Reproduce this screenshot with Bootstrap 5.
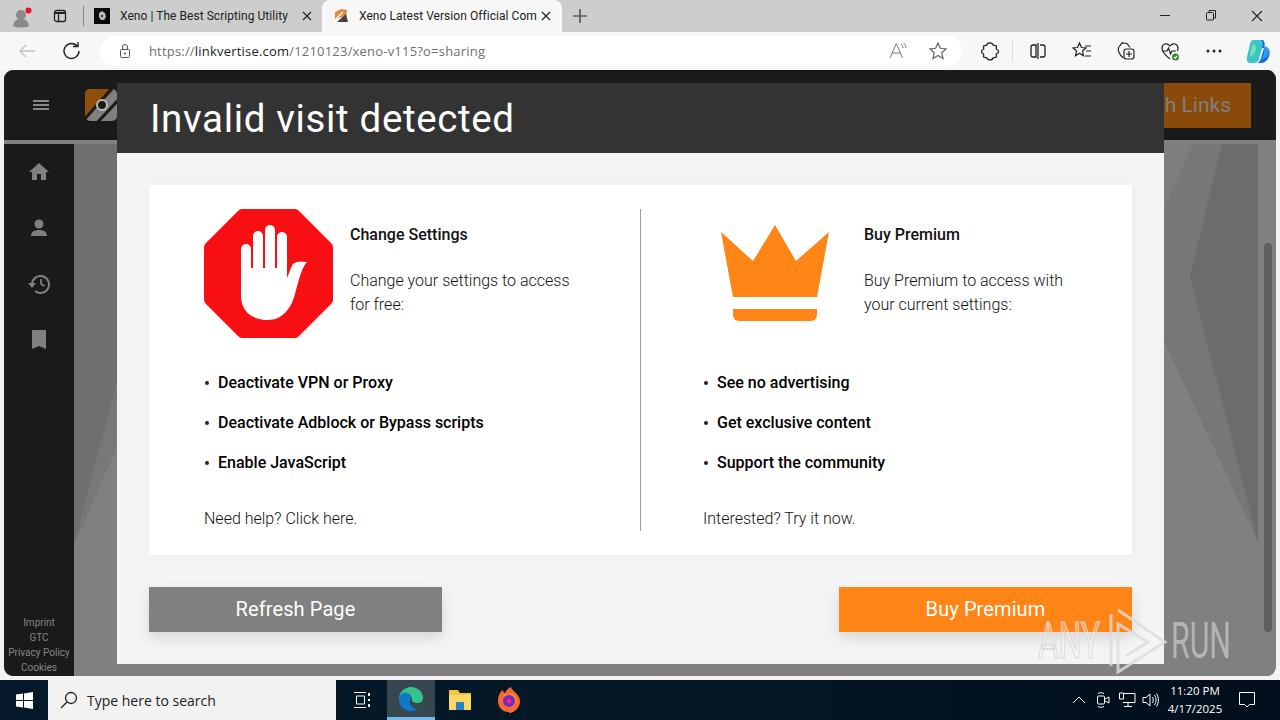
<!DOCTYPE html>
<html lang="en">
<head>
<meta charset="utf-8">
<title>Invalid visit detected</title>
<link href="https://cdn.jsdelivr.net/npm/bootstrap@5.3.0/dist/css/bootstrap.min.css" rel="stylesheet">
<style>
html,body{height:720px;overflow:hidden;background:#f3f3f3}
.desk{height:720px;width:1280px;position:relative}
.tabstrip{height:32px;background:#cdcdcd;font:12px Roboto,sans-serif;color:#222}
.tabstrip svg,.toolrow svg{display:block;flex:none}
.profile{width:44px;justify-content:center}
.tab-btn{width:32px;justify-content:center}
.tab-sep{width:1px;height:20px;background:#888;margin:0 10px 0 7px}
.tab-any{height:32px;width:228px;padding:0 9px 0 0;white-space:nowrap;overflow:hidden}
.tab-on{background:#f7f7f7;border-radius:8px 8px 0 0;width:240px;padding:0 10px 0 11px;height:32px}
.tab-title{flex:1;overflow:hidden;margin-left:10px;white-space:nowrap;letter-spacing:.05px}
.tab-fav{width:16px;height:16px;flex:none}
.plus-ico{margin-left:9px}
.winctl{margin-left:auto;gap:0}
.winctl span{width:46px;display:flex;justify-content:center}
.toolrow{height:38px;background:#f7f7f7;padding-top:4px;padding-bottom:4px}
.backslot{width:54px;justify-content:center}
.reloadslot{width:36px;justify-content:center}
.addr{width:863px;height:30px;background:#fff;border-radius:15px;padding:0 14px 0 18px;margin-left:10px;font:13px "Open Sans",sans-serif;color:#6f6f6f}
.addr b{font-weight:400;color:#1d1d1d}
.url{margin-left:17px;flex:1;letter-spacing:.2px}
.tools{flex:1;padding-left:6px}
.tool{width:44px;display:flex;justify-content:center}
.tool-sep{width:1px;height:22px;background:#ddd;margin:0 3px 0 0}
.viewport{position:relative;height:606px;margin:0 4px;background:#808080;border-radius:9px;overflow:hidden}
.page-head{height:70px;background:#1a1a1a;margin-bottom:4px;padding-left:29px;position:relative}
.burger{width:16px;height:10px;border-top:2px solid #888;border-bottom:2px solid #888;position:relative}
.burger::after{content:"";position:absolute;left:0;right:0;top:2px;height:2px;background:#888}
.logo-slot{margin-left:36px}
.cta{position:absolute;top:13px;right:25px;width:200px;height:45px;background:#8a4a0a;color:#808080;font:400 21px Roboto,sans-serif;line-height:45px;text-align:right;padding-right:20px}
.side{width:70px;height:532px;background:#1a1a1a;color:#808080;position:relative;z-index:1}
.side-ico{height:56px;display:flex;justify-content:center;align-items:center}
.foot{margin-top:auto;font:10px/15px Roboto,sans-serif;text-align:center;padding-bottom:1px;color:#858585}
.scrollthumb{position:absolute;right:4px;top:173px;width:8px;height:389px;background:#5f5f5f;border-radius:4px}
.deco{position:absolute;left:70px;top:74px;width:1202px;height:532px}
.dialog{position:absolute;left:113px;top:13px;width:1047px;height:581px;background:#f4f4f4;font-family:Roboto,sans-serif}
.dialog-head{height:70px;background:#333;color:#fff;font-size:38.5px;line-height:72px;padding-left:33px;letter-spacing:.65px}
.dialog-body{padding:32px 32px 0}
.panel{height:370px;background:#fff;box-shadow:0 0 14px rgba(0,0,0,.04);padding:24px 0}
.halfcol{height:322px;padding-left:55px;width:491px;color:#111;font-size:16px;line-height:24px;font-weight:300}
.halfcol.rightcol{border-left:1px solid #9a9a9a;padding-left:62px;width:492px}
.promo{height:129px}
.promo-ico{width:129px;flex:none}
.rightcol .promo-ico{width:161px;padding-left:17px}
.crown-ico{margin-top:16px}
.promo-txt{margin-left:17px;padding-top:14px;width:240px}
.rightcol .promo-txt{margin-left:0;width:215px}
.promo-txt strong{font-weight:500;display:block;margin-bottom:22px}
.perks{list-style:none;margin:32px 0 0;padding:1px 0 0;font-weight:500;color:#000}
.perks li{height:24px;margin-bottom:16px;padding-left:14px;position:relative}
.perks li::before{content:"";position:absolute;left:1px;top:10px;width:4px;height:4px;border-radius:50%;background:#222}
.after{margin-top:32px;color:#111}
.actions{margin-top:32px}
.act{width:293px;height:45px;border:0;border-radius:0;color:#fff;font-size:20px;line-height:45px;padding:0;box-shadow:0 6px 14px rgba(0,0,0,.12);text-align:center;letter-spacing:.1px}
.act-grey{background:gray}
.act-orange{background:#ff8516}
.wm{position:absolute;left:1036px;top:606px;width:244px;height:70px;pointer-events:none}
.wm text{font-family:Roboto,sans-serif;font-size:50px}
.taskbar{position:absolute;left:0;top:680px;width:1280px;height:40px;background:linear-gradient(90deg,#06192a,#041725 50%,#020e1c);color:#fff}
.startbtn{width:48px;justify-content:center}
.searchbox{width:288px;height:40px;background:#f2f2f2;color:#222;font:14px "Open Sans",sans-serif;padding-left:12px}
.searchbox span{margin-left:9px}
.tb-ico{width:49px;height:40px;justify-content:center}
.tb-ico.tb-first{width:51px}
.tb-ico.act-app{width:48px;background:#36474f;border-bottom:3px solid #76b9ed}
.tray{margin-left:auto;font:11.5px/18px "Open Sans",sans-serif;text-align:center;padding-right:10px}
.tray-cam{margin-left:10px}
.tray-net{margin-left:8px}
.tray-vol{margin-left:6px}
.clock{width:56px;margin-left:7px;margin-right:1px}
.notif{width:46px;justify-content:center}
</style>
</head>
<body>
<div class="desk d-flex flex-column">
  <div class="tabstrip d-flex align-items-center">
    <div class="d-flex align-items-center profile">
      <svg width="26" height="26" viewBox="0 0 26 26"><circle cx="12" cy="12" r="5" fill="#8a8a8a"/><path d="M4 23c1-6 4-7 8-7s7 1 8 7c-4 2-12 2-16 0z" fill="#8a8a8a"/><circle cx="19.500" cy="7.500" r="3" fill="#e81123"/></svg>
    </div>
    <div class="d-flex align-items-center tab-btn">
      <svg width="16" height="16" viewBox="0 0 16 16" fill="none" stroke="#222" stroke-width="1.300"><rect x="2.500" y="2.500" width="11" height="11" rx="2"/><path d="M2.500 5h11" stroke-width="2"/><path d="M6.500 5v8.500" /></svg>
    </div>
    <div class="tab-sep"></div>
    <div class="d-flex align-items-center tab-any">
      <svg class="tab-fav" viewBox="0 0 16 16"><rect width="16" height="16" fill="#0a0a0a"/><path d="M5 5l3-2 3 2 1 4-2 3H7L5 9z" fill="#bbb"/><path d="M7 7h2v2H7z" fill="#333"/></svg>
      <span class="tab-title">Xeno | The Best Scripting Utility</span>
      <svg width="12" height="12" viewBox="0 0 12 12" stroke="#222" stroke-width="1.200"><path d="M2 2l8 8M10 2l-8 8"/></svg>
    </div>
    <div class="d-flex align-items-center tab-on">
      <svg class="tab-fav" viewBox="0 0 16 16"><path d="M2 4l6-3 6 1-1 6-11 3z" fill="#e8873a"/><path d="M4 14l9-8 2 8z" fill="#444"/><path d="M3 11l7-7" stroke="#fff" stroke-width="1.500"/></svg>
      <span class="tab-title">Xeno Latest Version Official Com</span>
      <svg width="12" height="12" viewBox="0 0 12 12" stroke="#222" stroke-width="1.200"><path d="M2 2l8 8M10 2l-8 8"/></svg>
    </div>
    <svg class="plus-ico" width="18" height="18" viewBox="0 0 18 18" stroke="#333" stroke-width="1.200"><path d="M9 2v14M2 9h14"/></svg>
    <div class="d-flex winctl">
      <span><svg width="12" height="12" viewBox="0 0 12 12" stroke="#222"><path d="M1 6.500h10"/></svg></span>
      <span><svg width="12" height="12" viewBox="0 0 12 12" fill="none" stroke="#222"><rect x="1.500" y="3.500" width="7" height="7.500" rx="1"/><path d="M4 3V1.500h6.500V9H9"/></svg></span>
      <span><svg width="14" height="14" viewBox="0 0 14 14" stroke="#222" stroke-width="1.100"><path d="M2 2l10 10M12 2L2 12"/></svg></span>
    </div>
  </div>

  <div class="toolrow d-flex align-items-center">
    <div class="d-flex backslot"><svg width="20" height="20" viewBox="0 0 20 20" fill="none" stroke="#c4c4c4" stroke-width="1.300"><path d="M18 10H3M9 4l-6 6 6 6"/></svg></div>
    <div class="d-flex reloadslot"><svg width="20" height="20" viewBox="0 0 20 20" fill="none" stroke="#222" stroke-width="1.400"><path d="M15.500 5.500A7.500 7.500 0 1 0 17 10"/><path d="M11 5.500h5V1"/></svg></div>
    <div class="addr d-flex align-items-center">
      <svg width="14" height="16" viewBox="0 0 14 16" fill="none" stroke="#555"><rect x="2.500" y="6.500" width="9" height="8" rx="1"/><path d="M4.500 6.500V4a2.500 2.500 0 0 1 5 0v2.500"/><circle cx="7" cy="10.500" r=".7" fill="#555"/></svg>
      <span class="url">https://<b>linkvertise.com</b>/1210123/xeno-v115?o=sharing</span>
      <svg class="me-3" width="20" height="20" viewBox="0 0 20 20" fill="none" stroke="#777"><path d="M2 17L8 3h.5l6 14M4.500 12h8"/><path d="M13 3c1.500 1 2 2 2 4M15.500 2c2 1.500 2.500 3 2.500 5" /></svg>
      <svg class="ms-1" width="20" height="20" viewBox="0 0 20 20" fill="none" stroke="#666" stroke-width="1.200"><path d="M10 2l2.400 5.300 5.600.6-4.200 3.800 1.200 5.800-5-3-5 3 1.200-5.800L2 7.900l5.600-.6z"/></svg>
    </div>
    <div class="tools d-flex align-items-center">
      <span class="tool"><svg width="20" height="20" viewBox="0 0 20 20" fill="none" stroke="#222" stroke-width="1.300"><path d="M7 4C7 1.200 12.500 1 13 4c0 1 3.500-.3 3.500 1.500 0 2-1 2.500.5 3 2 .6 2 3.400 0 4-1.500.5-.5 1-.5 3 0 1.800-3.500.5-3.500 1.500-.5 2.500-6 2.300-6 0 0-1-3.500.3-3.500-1.500 0-2 1-2.500-.5-3-2-.6-2-3.400 0-4 1.500-.5.500-1 .5-3C3.500 3.700 7 5 7 4z"/></svg></span>
      <span class="tool-sep"></span>
      <span class="tool"><svg width="20" height="20" viewBox="0 0 20 20" fill="none" stroke="#222" stroke-width="1.300"><path d="M8 4H5a2 2 0 0 0-2 2v8a2 2 0 0 0 2 2h3zM12 4h3a2 2 0 0 1 2 2v8a2 2 0 0 1-2 2h-3M10 2v16"/></svg></span>
      <span class="tool"><svg width="22" height="20" viewBox="0 0 22 20" fill="none" stroke="#222" stroke-width="1.200"><path d="M8.500 2l2 4.500 4.500.5-3.500 3 1 4.800-4-2.500-4 2.500 1-4.800L2 7l4.500-.5zM14 5h6M15 10h5M14 15h6"/></svg></span>
      <span class="tool"><svg width="22" height="22" viewBox="0 0 22 22" fill="none" stroke="#222" stroke-width="1.200"><path d="M4 7l3-4 5 .5 3 4M3.500 7c-.8 3 .5 8 5 11"/><rect x="9" y="9" width="10" height="10" rx="2.500"/><path d="M14 11v6M11 14h6"/></svg></span>
      <span class="tool"><svg width="22" height="22" viewBox="0 0 22 22" fill="none" stroke="#222" stroke-width="1.200"><path d="M11 19C6 15 3 12 3 8c0-4 5-6 8-2 3-4 8-2 8 2 0 1-.2 2-.7 3"/><path d="M4 11h4l1.500-3 2 6 1.500-3h4"/><circle cx="16.500" cy="17" r="3.500" fill="#2e8b2e" stroke="none"/><path d="M15 17l1.200 1.200 2-2.200" stroke="#fff"/></svg></span>
      <span class="tool"><svg width="16" height="4" viewBox="0 0 16 4" fill="#222"><circle cx="2" cy="2" r="1.500"/><circle cx="8" cy="2" r="1.500"/><circle cx="14" cy="2" r="1.500"/></svg></span>
      <span class="tool"><svg width="26" height="26" viewBox="0 0 26 26"><path d="M8 2h8c3 0 3 3 2 5l-4 14c-1 3-3 4-5 4H6c-3 0-5-2-4-6L5 6c.5-2 1.500-4 3-4z" fill="#38c7c9"/><path d="M10 6c-3 0-3 3-4 6l-1 5c-.5 2 2 2 3 0l3-5z" fill="#7be0b0"/><path d="M15 2c3 0 3 3 2.500 5L17 10h4c3 0 4 3 3.500 6-.5 4-3 8-7.500 9h-6c3 0 4-2 5-5l3-10c1-4 1-6-1-8z" fill="#1f63e0"/><path d="M19 8c1 4 0 9-3 14l6-3c2-3 3-8 0-10z" fill="#2b9cf0"/></svg></span>
    </div>
  </div>

  <div class="viewport">
    <div class="page-head d-flex align-items-center">
      <div class="burger"></div>
      <div class="logo-slot"><svg width="32" height="32" viewBox="0 0 32 32"><rect width="32" height="32" rx="5" fill="#808080"/><path d="M5 0h25L0 30V5a5 5 0 0 1 5-5z" fill="#8f4e0a"/><path d="M-2 32L28-2M10 36L40 4" stroke="#1a1a1a" stroke-width="3"/><circle cx="17" cy="16" r="5" fill="#1a1a1a" stroke="#bcbcbc" stroke-width="2"/></svg></div>
      <div class="cta">Earn with Links</div>
    </div>
    <div class="d-flex">
      <div class="side d-flex flex-column">
        <div class="side-ico"><svg width="20" height="20" viewBox="0 0 20 20" fill="currentColor"><path d="M10 1L0 10h3v8h5v-6h4v6h5v-8h3z"/></svg></div>
        <div class="side-ico"><svg width="18" height="18" viewBox="0 0 18 18" fill="currentColor"><circle cx="9" cy="5" r="4.500"/><path d="M1 17c0-4 3-6 8-6s8 2 8 6z"/></svg></div>
        <div class="side-ico"><svg width="22" height="20" viewBox="0 0 22 20" fill="none" stroke="currentColor" stroke-width="2"><path d="M4 10a8.500 8.500 0 1 1 3 7"/><path d="M13 5v5l3.500 2" stroke-width="1.700"/><path d="M0 9h8l-4 5z" fill="currentColor" stroke="none"/></svg></div>
        <div class="side-ico"><svg width="16" height="20" viewBox="0 0 16 20" fill="currentColor"><path d="M1 0h14v19l-7-3-7 3z"/></svg></div>
        <div class="foot"><div>Imprint</div><div>GTC</div><div>Privacy Policy</div><div>Cookies</div></div>
      </div>
    </div>
    <svg class="deco" viewBox="0 0 1202 532" preserveAspectRatio="none"><path d="M0 0h43v239L0 401z" fill="#6f6f6f"/><path d="M43 239v64L0 401z" fill="#787878"/><path d="M1090 0h94v398L1090 197z" fill="#777"/><path d="M1090 0h29l-29 65z" fill="#7e7e7e"/><path d="M1148 0l-32 132 68 266V0z" fill="#6c6c6c"/></svg>
    <div class="scrollthumb"></div>
    <div class="dialog">
      <div class="dialog-head">Invalid visit detected</div>
      <div class="dialog-body">
        <div class="panel d-flex">
          <div class="halfcol">
            <div class="promo d-flex">
              <div class="promo-ico"><svg width="129" height="129" viewBox="0 0 129 129"><path d="M38 0h53a6 6 0 0 1 4 2l32 32a6 6 0 0 1 2 4v53a6 6 0 0 1-2 4l-32 32a6 6 0 0 1-4 2H38a6 6 0 0 1-4-2L2 95a6 6 0 0 1-2-4V38a6 6 0 0 1 2-4L34 2a6 6 0 0 1 4-2z" fill="#f70f14"/><path d="M37 40a5 5 0 0 1 10 0V59h2V27a5 5 0 0 1 10 0V59h2V21a5 5 0 0 1 10 0V59h2V28a5 5 0 0 1 10 0V69C85 64 87 58 89 55C92 52 98 52 103 53C98 58 95 70 91 85C87 100 78 111 64 111C48 111 37 102 37 87Z" fill="#fff"/></svg></div>
              <div class="promo-txt"><strong>Change Settings</strong>Change your settings to access for free:</div>
            </div>
            <ul class="perks">
              <li>Deactivate VPN or Proxy</li>
              <li>Deactivate Adblock or Bypass scripts</li>
              <li>Enable JavaScript</li>
            </ul>
            <div class="after">Need help? Click here.</div>
          </div>
          <div class="halfcol rightcol">
            <div class="promo d-flex">
              <div class="promo-ico"><svg class="crown-ico" width="110" height="100" viewBox="0 0 110 100"><path d="M1 7L33 36 55 0 76 36 109 7 97 72H13z" fill="#ff8516"/><path d="M13 84H97v6a6 6 0 0 1-6 6H19a6 6 0 0 1-6-6z" fill="#ff8516"/></svg></div>
              <div class="promo-txt"><strong>Buy Premium</strong>Buy Premium to access with your current settings:</div>
            </div>
            <ul class="perks">
              <li>See no advertising</li>
              <li>Get exclusive content</li>
              <li>Support the community</li>
            </ul>
            <div class="after">Interested? Try it now.</div>
          </div>
        </div>
        <div class="actions d-flex justify-content-between">
          <button type="button" class="btn act act-grey">Refresh Page</button>
          <button type="button" class="btn act act-orange">Buy Premium</button>
        </div>
      </div>
    </div>
  </div>

  <svg class="wm" viewBox="0 0 244 70">
    <text x="2" y="52" fill="#ffffff" fill-opacity=".3" stroke="#d6d6d6" stroke-width="1.200" textLength="62" lengthAdjust="spacingAndGlyphs">ANY</text>
    <path d="M75 8V60M82 4L129 36 82 66V18L112 36 90 50" fill="none" stroke="#dcdcdc" stroke-width="3" opacity=".8"/>
    <text x="135" y="52" fill="#b4b4b4" textLength="60" lengthAdjust="spacingAndGlyphs">RUN</text>
  </svg>

  <div class="taskbar d-flex align-items-center">
    <div class="startbtn d-flex"><svg width="17" height="17" viewBox="0 0 17 17" fill="#fff"><path d="M0 2.500L7 1.500v6.500H0zM8 1.400L17 0v8H8zM0 9h7v6.500L0 14.500zM8 9h9v8l-9-1.400z"/></svg></div>
    <div class="searchbox d-flex align-items-center"><svg width="18" height="18" viewBox="0 0 18 18" fill="none" stroke="#222" stroke-width="1.300"><circle cx="11" cy="7" r="5.500"/><path d="M7 11l-6 6"/></svg><span>Type here to search</span></div>
    <div class="tb-ico tb-first d-flex align-items-center"><svg width="18" height="18" viewBox="0 0 18 18" fill="none" stroke="#fff"><path d="M1 1.500h12M1 16.500h12M3.500 5h8v8h-8z"/><path d="M16 2v3M16 8v2M16 13v3" stroke-width="2"/></svg></div>
    <div class="tb-ico act-app d-flex align-items-center"><svg width="26" height="26" viewBox="0 0 26 26"><path d="M1 13C1 6 6.500 1 13 1c7 0 12 5 12 11 0 4-3 5-6 5-2 0-5-1-5-3 0-4-3-6-5-6-4 0-8 2-8 5z" fill="#35c58a"/><path d="M1 13c0-4 4-7 8-6 5 1 4 6 3 8-1 3 3 9 8 8-2 1.500-4 2-7 2C6 25 1 20 1 13z" fill="#0f78c8"/></svg></div>
    <div class="tb-ico d-flex align-items-center"><svg width="24" height="22" viewBox="0 0 24 22"><path d="M1 1h9l2 3h11v4H1z" fill="#f5c33c"/><path d="M1 6h22v15H1z" fill="#fbd765"/><path d="M8 13h8v8H8z" fill="#2b7fc2"/></svg></div>
    <div class="tb-ico d-flex align-items-center"><svg width="24" height="26" viewBox="0 0 24 26"><path d="M12 25C5 25 1 20 1 14 1 9 3 5 6 3c0 2 1 3 2 3 1-3 4-5 6-6 0 2 2 3 4 5 3 3 5 6 5 9 0 6-5 12-11 12z" fill="#f9692e"/><path d="M7 8l9-2 4 7-4 7H8z" fill="#ffb01f" opacity=".5"/><circle cx="12" cy="14" r="6" fill="#6a2bd0"/><circle cx="12" cy="14" r="2.500" fill="#f26"/></svg></div>
    <div class="tray d-flex align-items-center">
      <svg width="14" height="10" viewBox="0 0 14 10" fill="none" stroke="#fff"><path d="M1 8l6-6 6 6"/></svg>
      <svg class="tray-cam" width="14" height="18" viewBox="0 0 14 18" fill="none" stroke="#fff"><rect x="1.500" y="5" width="7" height="8" rx="1"/><path d="M9 8l4-2v6l-4-2M2 2.500c2-1 4-1 6 0M2 15.500c2 1 4 1 6 0"/></svg>
      <svg class="tray-net" width="18" height="16" viewBox="0 0 18 16" fill="none" stroke="#fff"><path d="M5 1.500h12v9H5M1.500 1h4v6h-4zM10 10.500v4M6 14.500h8"/></svg>
      <svg class="tray-vol" width="18" height="16" viewBox="0 0 18 16" fill="none" stroke="#fff"><path d="M1 5.500h3L8 2v12l-4-3.500H1zM10.500 5c1 2 1 4 0 6M12.500 3c2 3 2 7 0 10M14.500 1.500c2.500 4 2.500 9 0 13"/></svg>
      <div class="clock"><div>11:20 PM</div><div>4/17/2025</div></div>
      <div class="notif d-flex"><svg width="16" height="16" viewBox="0 0 16 16" fill="none" stroke="#fff"><path d="M.500.500h15v12h-5l-2.500 2.500-2.500-2.500h-5z"/></svg></div>
    </div>
  </div>
</div>
<script src="https://cdn.jsdelivr.net/npm/bootstrap@5.3.0/dist/js/bootstrap.bundle.min.js"></script>
</body>
</html>
